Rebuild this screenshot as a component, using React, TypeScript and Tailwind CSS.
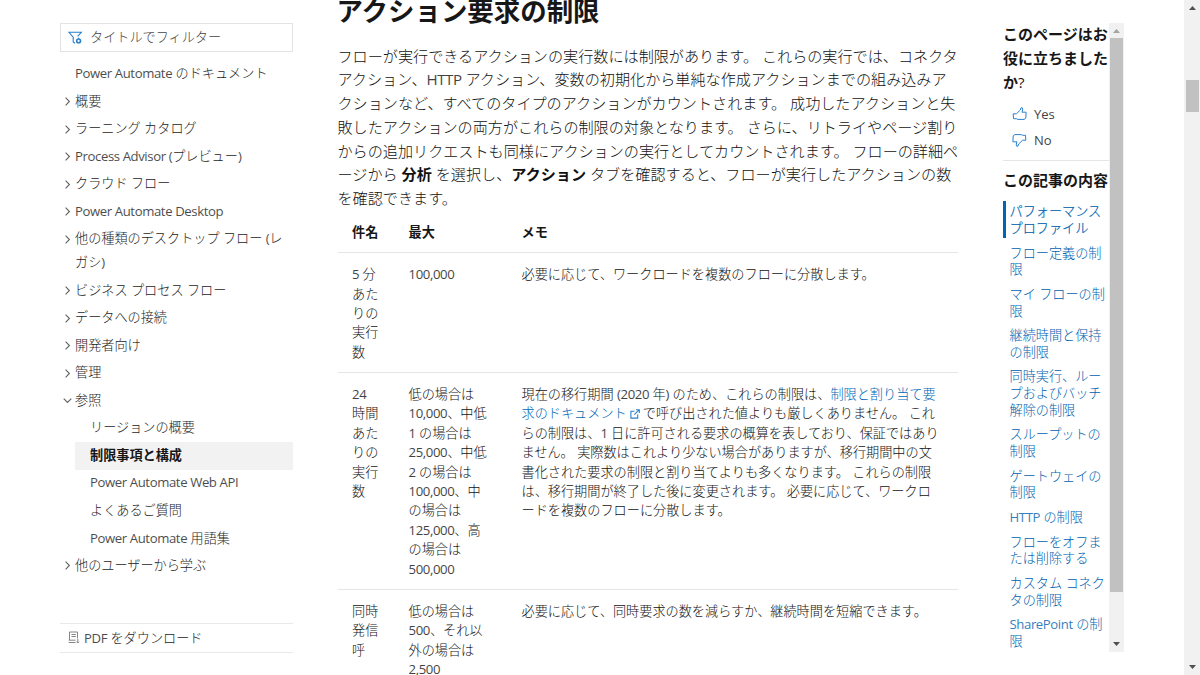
import React from "react";

/** Sets Latin runs slightly tighter and heavier than the Japanese text around them. */
function T({ children }: { children: string }) {
  const parts = children.split(/([\x21-\x7e]+(?: [\x21-\x7e]+)*)/);
  return (
    <>
      {parts.map((p, i) =>
        i % 2 === 1 ? (
          <span key={i} className="font-normal tracking-[-0.030em] opacity-80">
            {p}
          </span>
        ) : (
          p
        ),
      )}
    </>
  );
}

function Lines({ lines }: { lines: string[] }) {
  return (
    <>
      {lines.map((l) => (
        <div key={l} className="whitespace-nowrap">
          <T>{l}</T>
        </div>
      ))}
    </>
  );
}

function Chevron({ open }: { open?: boolean }) {
  return (
    <svg className="h-[9px] w-[9px] shrink-0" viewBox="0 0 9 9" fill="none" stroke="#606060" strokeWidth="1.1">
      {open ? <path d="M0.7 2.7 4.5 6.5 8.3 2.7" /> : <path d="M2.6 0.7 6.4 4.5 2.6 8.3" />}
    </svg>
  );
}

function FilterIcon() {
  return (
    <svg className="h-[14px] w-[15px]" viewBox="0 0 15 14" fill="none" stroke="#2a80cc" strokeWidth="1.1">
      <path d="M7 12.3 5.2 11V6.2L0.9 1.3h12.4L9.6 5.4" />
      <circle cx="10.6" cy="9.9" r="1.9" strokeWidth="1.6" />
      <path d="M10.6 6.8v1.2" />
    </svg>
  );
}

function PdfIcon() {
  return (
    <svg className="h-[13px] w-[12px]" viewBox="0 0 12 13" fill="none" stroke="#777" strokeWidth="0.9">
      <path d="M9.500 7.500V1H1.500v8M0.700 9.200h6.800M0.700 11.500h6.800M3.500 3.500h4.300M3.500 5.500h4.300M9.800 8v4M8.600 10.700 9.800 12l1.200-1.300" />
    </svg>
  );
}

function ThumbIcon({ down }: { down?: boolean }) {
  return (
    <svg
      className={down ? "h-[14px] w-[15px] rotate-180" : "h-[14px] w-[15px]"}
      viewBox="0 0 15 14"
      fill="none"
      stroke="#2a80cc"
      strokeWidth="1"
      strokeLinejoin="round"
    >
      <path d="M1.200 6.800h3.200L8.300 3l.8-2.300 1.400.3.200 1.800-.7 2.400h4.100l-.3 6-1.700 1.200H5.800L4.300 11.700H1.500z" />
    </svg>
  );
}

function ExternalIcon() {
  return (
    <svg className="mx-[3px] inline-block h-[10px] w-[10px] align-[-0.500px]" viewBox="0 0 10 10" fill="none" stroke="#2a80cc" strokeWidth="1.1">
      <path d="M4.500 2.200H.9v6.900h6.800V5.500M6 .7h3.300V4M9.300.7 4.300 5.700" />
    </svg>
  );
}

function Arrow({ down, light }: { down?: boolean; light?: boolean }) {
  return (
    <svg className="h-[4px] w-[7px]" viewBox="0 0 7 4" fill={light ? "#a3a3a3" : "#505050"}>
      {down ? <path d="M0 0h7L3.500 4z" /> : <path d="M0 4h7L3.500 0z" />}
    </svg>
  );
}

const nav: { lines: string[] }[] = [
  { lines: ["概要"] },
  { lines: ["ラーニング カタログ"] },
  { lines: ["Process Advisor (プレビュー)"] },
  { lines: ["クラウド フロー"] },
  { lines: ["Power Automate Desktop"] },
  { lines: ["他の種類のデスクトップ フロー (レ", "ガシ)"] },
  { lines: ["ビジネス プロセス フロー"] },
  { lines: ["データへの接続"] },
  { lines: ["開発者向け"] },
  { lines: ["管理"] },
];

const children = [
  "リージョンの概要",
  "制限事項と構成",
  "Power Automate Web API",
  "よくあるご質問",
  "Power Automate 用語集",
];

const toc: string[][] = [
  ["パフォーマンス", "プロファイル"],
  ["フロー定義の制", "限"],
  ["マイ フローの制", "限"],
  ["継続時間と保持", "の制限"],
  ["同時実行、ルー", "プおよびバッチ", "解除の制限"],
  ["スループットの", "制限"],
  ["ゲートウェイの", "制限"],
  ["HTTP の制限"],
  ["フローをオフま", "たは削除する"],
  ["カスタム コネク", "タの制限"],
  ["SharePoint の制", "限"],
];

function NavRow({ lines, open }: { lines: string[]; open?: boolean }) {
  return (
    <div className="flex gap-[3px] py-[1.900px] pl-[3px]">
      <div className="flex h-[23.750px] items-center">
        <Chevron open={open} />
      </div>
      <div>
        <Lines lines={lines} />
      </div>
    </div>
  );
}

function Sidebar() {
  return (
    <nav className="ml-[60px] flex w-[232.500px] shrink-0 flex-col pt-[23px] text-[13.150px] leading-[23.750px] text-[#1c1c1c]">
      <div className="flex h-[29px] items-center gap-[7px] border border-[#e3e3e3] pl-[7px] text-[#444]">
        <FilterIcon />
        <span className="pt-px">タイトルでフィルター</span>
      </div>
      <div className="mt-[8.400px] h-[570.600px]">
        <div className="py-[1.900px] pl-[15px]">
          <Lines lines={["Power Automate のドキュメント"]} />
        </div>
        {nav.map((n) => (
          <NavRow key={n.lines[0]} lines={n.lines} />
        ))}
        <NavRow lines={["参照"]} open />
        {children.map((c, i) => (
          <div
            key={c}
            className={
              i === 1
                ? "ml-[15px] bg-[#f2f2f2] py-[1.900px] pl-[15px] font-bold text-[#171717]"
                : "ml-[15px] py-[1.900px] pl-[15px]"
            }
          >
            <Lines lines={[c]} />
          </div>
        ))}
        <NavRow lines={["他のユーザーから学ぶ"]} />
      </div>
      <div className="-mt-[8px] flex h-[30px] items-center gap-[4px] border-y border-[#e9e9e9] pl-[8px]">
        <PdfIcon />
        <span className="pt-px">
          <T>PDF をダウンロード</T>
        </span>
      </div>
    </nav>
  );
}

const row = "flex border-t border-[#e6e6e6] pt-[12.200px] pb-[9.600px]";
const c1 = "w-[56.500px] shrink-0 ml-[14.500px]";
const c2 = "w-[113px] shrink-0";

function Article() {
  return (
    <main className="ml-[45px] w-[620px] shrink-0 text-[#111]">
      <h2 className="-mt-[7px] -ml-px h-[51.500px] text-[26.450px] leading-[36px] font-bold whitespace-nowrap text-[#171717]">
        アクション要求の制限
      </h2>
      <div className="text-[15.120px] leading-[23.750px]">
        <Lines
          lines={[
            "フローが実行できるアクションの実行数には制限があります。 これらの実行では、コネクタ",
            "アクション、HTTP アクション、変数の初期化から単純な作成アクションまでの組み込みア",
            "クションなど、すべてのタイプのアクションがカウントされます。 成功したアクションと失",
            "敗したアクションの両方がこれらの制限の対象となります。 さらに、リトライやページ割り",
            "からの追加リクエストも同様にアクションの実行としてカウントされます。 フローの詳細ペ",
          ]}
        />
        <div className="whitespace-nowrap">
          ージから <b className="font-bold">分析</b> を選択し、<b className="font-bold">アクション</b> タブを確認すると、フローが実行したアクションの数
        </div>
        <div>を確認できます。</div>
      </div>
      <div className="mt-[12.300px] text-[13.170px] leading-[19.410px]">
        <div className="flex pb-[9.600px] font-bold text-[#171717]">
          <div className={c1}>件名</div>
          <div className={c2}>最大</div>
          <div>メモ</div>
        </div>
        <div className={row}>
          <div className={c1}>
            <Lines lines={["5 分", "あた", "りの", "実行", "数"]} />
          </div>
          <div className={c2}>
            <Lines lines={["100,000"]} />
          </div>
          <div>必要に応じて、ワークロードを複数のフローに分散します。</div>
        </div>
        <div className={row}>
          <div className={c1}>
            <Lines lines={["24", "時間", "あた", "りの", "実行", "数"]} />
          </div>
          <div className={c2}>
            <Lines
              lines={[
                "低の場合は",
                "10,000、中低",
                "1 の場合は",
                "25,000、中低",
                "2 の場合は",
                "100,000、中",
                "の場合は",
                "125,000、高",
              ]}
            />
            <Lines lines={["の場合は", "500,000"]} />
          </div>
          <div className="whitespace-nowrap">
            <div>
              <T>現在の移行期間 (2020 年) のため、これらの制限は、</T>
              <a className="text-[#0065b3]">制限と割り当て要</a>
            </div>
            <div>
              <a className="text-[#0065b3]">
                求のドキュメント
                <ExternalIcon />
              </a>
              で呼び出された値よりも厳しくありません。 これ
            </div>
            <Lines
              lines={[
                "らの制限は、1 日に許可される要求の概算を表しており、保証ではあり",
                "ません。 実際数はこれより少ない場合がありますが、移行期間中の文",
                "書化された要求の制限と割り当てよりも多くなります。 これらの制限",
                "は、移行期間が終了した後に変更されます。 必要に応じて、ワークロ",
                "ードを複数のフローに分散します。",
              ]}
            />
          </div>
        </div>
        <div className={row}>
          <div className={c1}>
            <Lines lines={["同時", "発信", "呼"]} />
          </div>
          <div className={c2}>
            <Lines lines={["低の場合は", "500、それ以", "外の場合は", "2,500"]} />
          </div>
          <div>必要に応じて、同時要求の数を減らすか、継続時間を短縮できます。</div>
        </div>
      </div>
    </main>
  );
}

function Aside() {
  return (
    <aside className="mt-[23px] ml-[45.500px] flex h-[629px] w-[121px] shrink-0 overflow-hidden">
      <div className="w-[106px] shrink-0">
        <div className="text-[15px] leading-[23.750px] font-bold text-[#171717]">
          <div className="whitespace-nowrap">このページはお</div>
          <div className="whitespace-nowrap">役に立ちました</div>
          <div>
            か<span className="font-medium">?</span>
          </div>
        </div>
        <div className="mt-[7px] border-b border-[#e6e6e6] pb-[7px] text-[13px] leading-[26px] font-normal text-[#444]">
          <div className="flex items-center gap-[7px] pl-[9px]">
            <ThumbIcon />
            Yes
          </div>
          <div className="flex items-center gap-[7px] pl-[9px]">
            <ThumbIcon down />
            No
          </div>
        </div>
        <div className="mt-[8px] text-[15px] leading-[23.750px] font-bold whitespace-nowrap text-[#171717]">
          この記事の内容
        </div>
        <div className="mt-[7.500px] text-[13.150px] leading-[16.700px] text-[#005fb0]">
          {toc.map((t, i) => (
            <div
              key={t[0]}
              className={
                i === 0
                  ? "mb-[6.700px] border-l-[3px] border-[#0065b3] pt-[2.900px] pb-[1.100px] pl-[3.500px] [-webkit-text-stroke:0.2px]"
                  : "mb-[7.900px] pl-[6.500px]"
              }
            >
              <Lines lines={t} />
            </div>
          ))}
        </div>
      </div>
      <div className="flex w-[15px] shrink-0 flex-col items-center bg-[#f1f1f1]">
        <div className="flex h-[15px] items-center">
          <Arrow light />
        </div>
        <div className="h-[554px] w-[13px] bg-[#c1c1c1]" />
        <div className="mt-auto flex h-[16px] items-center">
          <Arrow down />
        </div>
      </div>
    </aside>
  );
}

export default function App() {
  return (
    <div className="flex h-[675px] w-[1200px] overflow-hidden bg-white font-['Open_Sans','Noto_Sans_CJK_JP',sans-serif] font-light">
      <Sidebar />
      <Article />
      <Aside />
      <div className="ml-auto flex w-[16px] shrink-0 flex-col items-center bg-[#f1f1f1]">
        <div className="flex h-[80px] items-start pt-[6px]">
          <Arrow />
        </div>
        <div className="h-[32px] w-[13px] bg-[#c1c1c1]" />
        <div className="mt-auto pb-[6px]">
          <Arrow down />
        </div>
      </div>
    </div>
  );
}
